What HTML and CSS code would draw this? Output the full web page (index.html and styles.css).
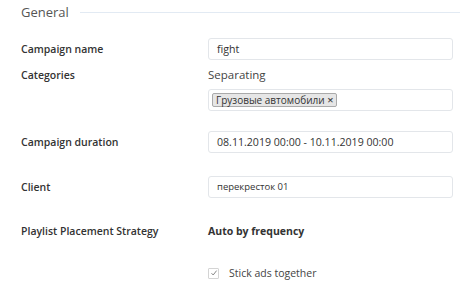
FILE: index.html
```html
<!DOCTYPE html>
<html lang="en">
<head>
    <meta charset="UTF-8">
    <title>Campaign</title>
    <link rel="stylesheet" href="styles.css">
</head>
<body>
    <div class="form">
        <div class="section-title">
            <span>General</span>
            <div class="line"></div>
        </div>

        <div class="row row-name">
            <label>Campaign name</label>
            <div class="field"><div class="input">fight</div></div>
        </div>

        <div class="row row-cat">
            <label>Categories</label>
            <div class="field">
                <div class="plain sep">Separating</div>
                <div class="input tags">
                    <span class="tag">Грузовые автомобили <span class="x">×</span></span>
                </div>
            </div>
        </div>

        <div class="row row-dur">
            <label>Campaign duration</label>
            <div class="field"><div class="input">08.11.2019 00:00 - 10.11.2019 00:00</div></div>
        </div>

        <div class="row row-client">
            <label>Client</label>
            <div class="field"><div class="input small">перекресток 01</div></div>
        </div>

        <div class="row row-strategy">
            <label>Playlist Placement Strategy</label>
            <div class="field"><div class="plain bold">Auto by frequency</div></div>
        </div>

        <div class="row row-stick">
            <label></label>
            <div class="field">
                <div class="check">
                    <span class="box">
                        <svg width="8" height="8" viewBox="0 0 8 8"><path d="M1.5 4.2 L3.2 6 L6.6 1.6" fill="none" stroke="#888" stroke-width="1"/></svg>
                    </span>
                    Stick ads together
                </div>
            </div>
        </div>
    </div>
</body>
</html>
```

FILE: styles.css
```css
body {
    margin: 0;
    background: #fff;
    font-family: "Open Sans", "Noto Sans", sans-serif;
    color: #333;
}
.form {
    padding: 3px 0 0 21px;
}
.section-title {
    display: flex;
    align-items: center;
    height: 18px;
}
.section-title span {
    font-size: 13px;
    color: #555;
}
.section-title .line {
    flex: 1;
    height: 1px;
    background: #e2eaf3;
    margin-left: 11px;
}
.row {
    display: flex;
    align-items: flex-start;
}
.row label {
    width: 187px;
    flex: none;
    font-size: 10.5px;
    font-weight: 600;
    color: #333;
}
.field {
    width: 245px;
}
.input {
    height: 20px;
    border: 1px solid #e3e6ea;
    border-radius: 3px;
    padding-left: 8px;
    font-size: 10.6px;
    line-height: 20px;
    color: #333;
}
.input.small {
    font-size: 9.5px;
}
.plain {
    font-size: 11px;
    line-height: 16px;
    color: #444;
}
.plain.sep {
    font-size: 11.5px;
}
.plain.bold {
    font-size: 10.5px;
    font-weight: 700;
    color: #333;
}
.row-name {
    margin-top: 17px;
}
.row-name label {
    line-height: 22px;
}
.row-cat {
    margin-top: 7px;
}
.row-cat label {
    line-height: 16px;
}
.tags {
    margin-top: 6px;
    padding-left: 3px;
    display: flex;
    align-items: center;
}
.tag {
    display: inline-block;
    height: 12px;
    line-height: 12px;
    padding: 0 3px;
    background: #e6e6e6;
    border: 1px solid #aaa;
    border-radius: 2px;
    font-size: 10px;
    color: #333;
}
.tag .x {
    font-size: 11px;
    font-weight: 600;
    color: #444;
}
.row-dur {
    margin-top: 20px;
}
.row-dur label, .row-client label {
    line-height: 22px;
}
.row-client {
    margin-top: 23px;
}
.row-strategy {
    margin-top: 25px;
}
.row-strategy label {
    line-height: 16px;
}
.row-stick {
    margin-top: 26px;
}
.check {
    display: flex;
    align-items: center;
    font-size: 10.5px;
    color: #444;
    line-height: 16px;
}
.check .box {
    width: 9px;
    height: 9px;
    border: 1px solid #d4d4d4;
    border-radius: 1px;
    display: flex;
    align-items: center;
    justify-content: center;
    margin-right: 10px;
}
```
